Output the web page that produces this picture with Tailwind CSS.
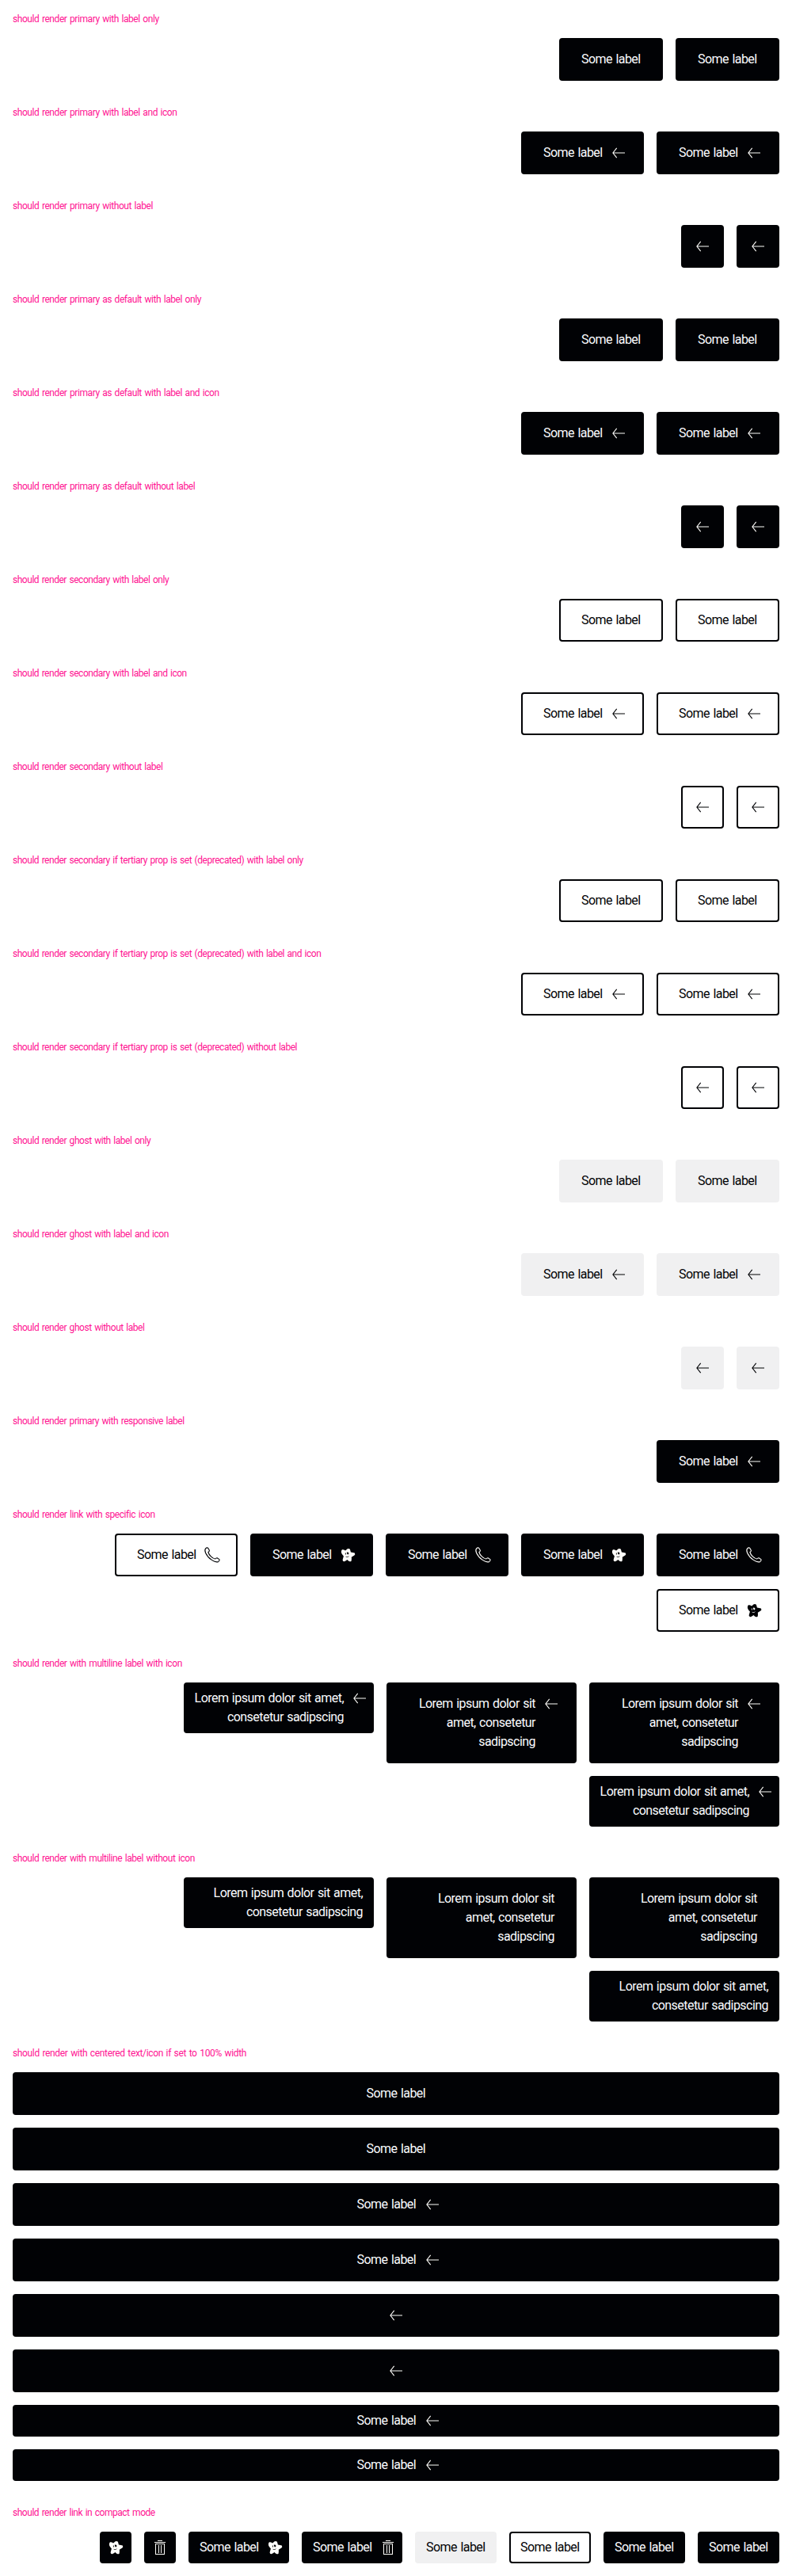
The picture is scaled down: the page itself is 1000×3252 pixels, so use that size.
<!DOCTYPE html>
<html lang="en">
<head>
<meta charset="utf-8">
<title>Link button variants</title>
<script src="https://cdn.jsdelivr.net/npm/@tailwindcss/browser@4"></script>
</head>
<body class="bg-white font-['Roboto','Liberation_Sans',sans-serif] text-[#010205] [word-spacing:1px]">
<svg class="hidden">
  <symbol id="arrow" viewBox="0 0 24 24"><path d="M4.8 12H20M9.7 5.8L4.9 12l4.8 6.2" fill="none" stroke="currentColor" stroke-width="1.1"/></symbol>
  <symbol id="phone" viewBox="0 0 24 24"><path d="M3.6 3.9Q5.4 2.2 6.8 3.4L8.4 6.2Q8.5 7.5 6.9 8.5Q7.6 11.2 10.3 13.8Q13 16.4 15.7 17Q16.9 15.6 18.1 15.7L21 17.6Q21.5 19.2 19.8 20.4Q16.8 22 11.4 18.4Q6.2 15 3.6 9.4Q2 5.8 3.6 3.9Z" fill="none" stroke="currentColor" stroke-width="1.1" stroke-linejoin="round"/></symbol>
  <symbol id="star" viewBox="0 0 24 24"><path fill-rule="evenodd" fill="currentColor" d="M4.9 5.3Q6.9 4.9 9 6.5Q9.9 5.9 11.3 4.5Q13.2 3.4 14.9 4.8L15.9 8.6Q18.8 9.2 20.8 9.4Q22 11.3 20.4 12.6L16.8 14.8Q17.2 17.6 16.6 19.8Q14.7 20.9 13 19.6L11.5 18.1Q9.7 19.5 7.8 20.2Q5.5 20.3 5.6 18.2L6.9 13.6Q4.8 11.4 4 9.2Q3.5 6.6 4.9 5.3ZM8.9 9.6h.9v1.8h-.9ZM10.8 8.7Q12.2 8 13.2 9.1L13.3 11L12 11.4L11.2 10.5ZM9.2 13.8Q11.8 15 13.9 12.9Q13.4 14.9 11 15Q9.7 14.7 9.2 13.8Z"/></symbol>
  <symbol id="trash" viewBox="0 0 24 24"><path fill="currentColor" d="M9 3h6v1H9zM5 5h14v1H5zM6 7h12v14H6zM7 8v12h10V8zM10 9h1v10h-1zM13 9h1v10h-1z" fill-rule="evenodd"/></symbol>
</svg>
<main id="page"></main>
<script>
const TONE = {
  primary: 'bg-[#010205] border-[#010205] text-[#fbfcff]',
  secondary: 'bg-white border-[#010205] text-[#010205]',
  ghost: 'bg-[#f0f0f1] border-[#f0f0f1] text-[#010205]',
};
const ICON_TONE = { primary: 'text-[#fefdfa]', secondary: 'text-[#010205]', ghost: 'text-[#010205]' };

// o: tone, text, icon, compact, width ('full' or 'wide')
function button(o) {
  const tone = o.tone || 'primary';
  let pad;
  if (!o.text) pad = o.compact ? 'p-1.5' : 'p-[13px]';
  else if (o.compact) pad = o.icon ? 'py-1.5 pl-3 pr-1' : 'py-1.5 px-3';
  else pad = o.icon ? 'py-[13px] pl-[26px] pr-[18px]' : 'py-[13px] px-[26px]';
  const width = o.width === 'full' ? 'w-full justify-center' : o.width === 'wide' ? 'w-[240px] justify-end' : '';
  const label = o.text
    ? `<span class="${o.width === 'wide' ? 'text-right' : 'w-[75px]'} tracking-[-0.54px] whitespace-nowrap">${o.text}</span>` : '';
  const icon = o.icon ? `<svg class="size-6 shrink-0 ${ICON_TONE[tone]}"><use href="#${o.icon}"/></svg>` : '';
  return `<a class="flex items-start gap-2 rounded border-2 text-base leading-6 ${TONE[tone]} ${pad} ${width}">${label}${icon}</a>`;
}
function section(title, items, tracking = 'tracking-[-0.43px]') {
  return `<section class="p-4"><h2 class="mb-4 text-xs leading-4 text-[#ff1493] ${tracking}">${title}</h2>
    <div class="flex flex-row-reverse flex-wrap items-start gap-4">${items.map(button).join('')}</div></section>`;
}
const L = 'Some label', twice = o => [o, o];
let html = '';
for (const [name, tone, tracking] of [
  ['primary', 'primary'], ['primary as default', 'primary'], ['secondary', 'secondary', 'tracking-[-0.47px]'],
  ['secondary if tertiary prop is set (deprecated)', 'secondary', 'tracking-[-0.47px]'], ['ghost', 'ghost', 'tracking-[-0.46px]']]) {
  html += section(`should render ${name} with label only`, twice({ tone, text: L }), tracking);
  html += section(`should render ${name} with label and icon`, twice({ tone, text: L, icon: 'arrow' }), tracking);
  html += section(`should render ${name} without label`, twice({ tone, icon: 'arrow' }), tracking);
}
html += section('should render primary with responsive label', [{ text: L, icon: 'arrow' }], 'tracking-[-0.46px]');
html += section('should render link with specific icon', [
  { text: L, icon: 'phone' }, { text: L, icon: 'star' }, { text: L, icon: 'phone' }, { text: L, icon: 'star' },
  { text: L, icon: 'phone', tone: 'secondary' }, { text: L, icon: 'star', tone: 'secondary' }]);
const three = 'Lorem ipsum dolor sit<br>amet, consetetur<br>sadipscing', two = 'Lorem ipsum dolor sit amet,<br>consetetur sadipscing';
for (const [name, icon] of [['with', 'arrow'], ['without', '']]) {
  const big = { text: three, icon, width: 'wide' }, small = { text: two, icon, width: 'wide', compact: true };
  html += section(`should render with multiline label ${name} icon`, [big, big, small, small]);
}
html += section('should render with centered text/icon if set to 100% width', [
  ...twice({ text: L, width: 'full' }), ...twice({ text: L, icon: 'arrow', width: 'full' }),
  ...twice({ icon: 'arrow', width: 'full' }), ...twice({ text: L, icon: 'arrow', width: 'full', compact: true })],
  'tracking-[-0.35px]');
html += section('should render link in compact mode', [
  ...twice({ text: L, compact: true }), { text: L, compact: true, tone: 'secondary' }, { text: L, compact: true, tone: 'ghost' },
  { text: L, icon: 'trash', compact: true }, { text: L, icon: 'star', compact: true },
  { icon: 'trash', compact: true }, { icon: 'star', compact: true }], 'tracking-[-0.47px]');
document.getElementById('page').innerHTML = html;
</script>
</body>
</html>
